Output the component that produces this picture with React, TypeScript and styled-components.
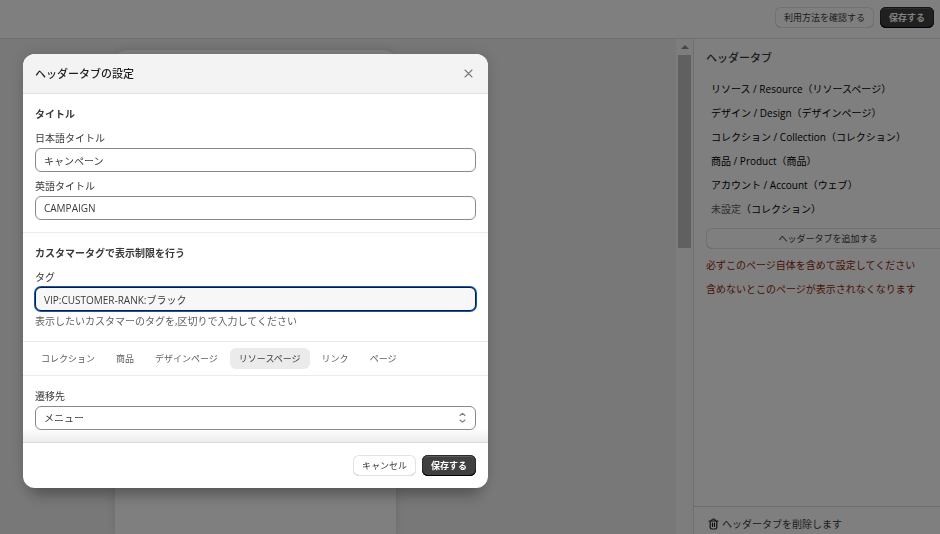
import React, { useState } from "react";
import styled, { createGlobalStyle, css } from "styled-components";

const GlobalStyle = createGlobalStyle`
  *, *::before, *::after { box-sizing: border-box; }
  body {
    margin: 0;
    overflow: hidden;
    background: #f1f1f1;
    color: #3a3a3a;
    font-family: "Open Sans", "Noto Sans CJK JP", sans-serif;
    font-size: 10px;
    line-height: 16px;
  }
  button, input, select { font: inherit; color: inherit; margin: 0; }
  h1, h2, h3, p, ul { margin: 0; padding: 0; }
`;

const Page = styled.div`
  height: 100vh;
  display: flex;
  flex-direction: column;
`;

const TopBar = styled.header`
  display: flex;
  justify-content: flex-end;
  gap: 6px;
  padding: 7px 6px 10px;
  background: #fff;
  border-bottom: 1px solid #dedede;
`;

const Button = styled.button<{ $primary?: boolean; $wide?: boolean }>`
  height: 21px;
  padding: 0 9px;
  border: 0;
  border-radius: 6px;
  font-size: 9px;
  line-height: 21px;
  white-space: nowrap;
  background: #fff;
  box-shadow: inset 0 0 0 1px #e3e3e3, inset 0 -1px 0 #b5b5b5;
  ${(p) => p.$wide && css`width: 100%;`}
  ${(p) =>
    p.$primary &&
    css`
      color: #fff;
      font-weight: 700;
      background: #404040;
      box-shadow: inset 0 -1px 0 #000, inset 0 0 0 1px #2a2a2a, inset 0 2px 0 #5c5c5c;
    `}
`;

const Workspace = styled.div`
  flex: 1;
  min-height: 0;
  display: flex;
`;

const Canvas = styled.main`
  flex: 1;
  min-width: 0;
  padding: 11px 0 0 115px;
  overflow: hidden;
`;

const Sheet = styled.div`
  width: 281px;
  height: 100%;
  border-radius: 12px 12px 0 0;
  background: #fff;
  box-shadow: 0 0 12px rgba(0, 0, 0, 0.1);
`;

const ScrollTrack = styled.div`
  width: 17px;
  padding: 6px 2px 0;
  display: flex;
  flex-direction: column;
  align-items: center;
  gap: 6px;
  background: #fafafa;
`;

const ScrollThumb = styled.div`
  width: 100%;
  height: 193px;
  background: #c1c1c1;
`;

const SidePanel = styled.aside`
  flex: 0 0 247px;
  border-left: 1px solid #dcdcdc;
  background: #fff;
  overflow: hidden;
  display: flex;
  flex-direction: column;
`;

const PanelContent = styled.div`
  flex: 1;
  min-width: 268px;
  padding: 11px 12px;
`;

const PanelTitle = styled.h2`
  font-size: 11px;
  font-weight: 500;
`;

const TabList = styled.ul`
  list-style: none;
  padding: 11px 5px 7px;
  color: #000;
`;

const TabListItem = styled.li<{ $unset?: boolean }>`
  line-height: 24px;
  white-space: nowrap;
  span { color: ${(p) => (p.$unset ? "#616161" : "inherit")}; }
`;

const Warning = styled.p`
  margin-top: 8px;
  color: #8e1f0b;
  white-space: nowrap;
`;

const PanelFooter = styled.footer`
  padding: 9px 12px 2px;
  border-top: 1px solid #dcdcdc;
`;

const DeleteButton = styled.button`
  display: flex;
  align-items: center;
  gap: 3px;
  padding: 0 0 0 2px;
  border: 0;
  background: none;
`;

const Backdrop = styled.div`
  position: fixed;
  inset: 0;
  padding: 54px 23px;
  background: rgba(0, 0, 0, 0.5);
`;

const Dialog = styled.form`
  width: 465px;
  max-width: 100%;
  border-radius: 12px;
  overflow: hidden;
  background: #fff;
  box-shadow: 0 15px 15px -8px rgba(0, 0, 0, 0.28), 0 0 16px rgba(0, 0, 0, 0.14);
`;

const DialogHeader = styled.header`
  display: flex;
  align-items: center;
  justify-content: space-between;
  padding: 12px;
  height: 40px;
  background: #f3f3f3;
  border-bottom: 1px solid #e1e1e1;
`;

const DialogTitle = styled.h1`
  font-size: 11px;
  font-weight: 500;
  color: #1f1f1f;
`;

const IconButton = styled.button`
  display: flex;
  padding: 2px;
  border: 0;
  background: none;
`;

const Section = styled.section<{ $fade?: boolean }>`
  display: flex;
  flex-direction: column;
  gap: 6px;
  padding: 12px;
  border-bottom: 1px solid ${(p) => (p.$fade ? "#dcdcdc" : "#ebebeb")};
  ${(p) => p.$fade && css`background: linear-gradient(to top, #ececec, #fff 14px);`}
`;

const SectionTitle = styled.h2`
  margin-bottom: 2px;
  font-size: 10px;
  font-weight: 700;
`;

const Field = styled.div`
  display: flex;
  flex-direction: column;
  gap: 2px;
`;

const fieldBox = css`
  width: 100%;
  height: 24px;
  padding: 0 8px;
  border: 1px solid #8a8a8a;
  border-radius: 6px;
  background: #fff;
`;

const TextInput = styled.input<{ $focused?: boolean }>`
  ${fieldBox}
  outline: 0;
  ${(p) =>
    p.$focused &&
    css`
      border-color: #1a1a1a;
      background: #f7f7f7;
      box-shadow: 0 0 0 1px #005bd3;
    `}
`;

const Help = styled.p`
  color: #616161;
`;

const SelectWrap = styled.div`
  position: relative;
  svg {
    position: absolute;
    right: 9px;
    top: 6px;
    pointer-events: none;
  }
`;

const Select = styled.select`
  ${fieldBox}
  appearance: none;
`;

const Tabs = styled.div`
  display: flex;
  gap: 3px;
  padding: 6px 9px;
  border-bottom: 1px solid #ebebeb;
`;

const Tab = styled.button<{ $active: boolean }>`
  height: 21px;
  padding: 0 9px;
  border: 0;
  border-radius: 6px;
  font-size: 9px;
  line-height: 21px;
  white-space: nowrap;
  color: ${(p) => (p.$active ? "#404040" : "#616161")};
  background: ${(p) => (p.$active ? "#ebebeb" : "none")};
`;

const DialogFooter = styled.footer`
  display: flex;
  justify-content: flex-end;
  gap: 6px;
  padding: 12px;
`;

const CloseIcon = () => (
  <svg width="11" height="11" viewBox="0 0 11 11" fill="none" stroke="#7a7a7a" strokeWidth="1.1" strokeLinecap="round">
    <path d="M2 2l7 7M9 2l-7 7" />
  </svg>
);

const UpDownIcon = () => (
  <svg width="9" height="12" viewBox="0 0 9 12" fill="none" stroke="#7a7a7a" strokeWidth="1.1" strokeLinecap="round" strokeLinejoin="round">
    <path d="M2 3.500l2.500-2.200L7 3.500M2 8l2.500 2.200L7 8" />
  </svg>
);

const TrashIcon = () => (
  <svg width="11" height="12" viewBox="0 0 11 12" fill="none" stroke="#1f1f1f" strokeWidth="1.2" strokeLinecap="round" strokeLinejoin="round">
    <path d="M1 3h9M3.500 3c0-1.200.8-2 2-2s2 .8 2 2M2.200 3v6.500c0 .9.600 1.500 1.500 1.500h3.600c.9 0 1.500-.6 1.500-1.500V3M4.500 5.200v3.300M6.500 5.200v3.300" />
  </svg>
);

const headerTabs = [
  { name: "リソース / Resource", kind: "リソースページ" },
  { name: "デザイン / Design", kind: "デザインページ" },
  { name: "コレクション / Collection", kind: "コレクション" },
  { name: "商品 / Product", kind: "商品" },
  { name: "アカウント / Account", kind: "ウェブ" },
  { name: "未設定", kind: "コレクション", unset: true },
];

const linkKinds = ["コレクション", "商品", "デザインページ", "リソースページ", "リンク", "ページ"];

export default function App() {
  const [kind, setKind] = useState("リソースページ");

  return (
    <>
      <GlobalStyle />
      <Page lang="ja">
        <TopBar>
          <Button type="button">利用方法を確認する</Button>
          <Button type="button" $primary>保存する</Button>
        </TopBar>
        <Workspace>
          <Canvas>
            <Sheet />
          </Canvas>
          <ScrollTrack>
            <svg width="8" height="4" viewBox="0 0 8 4" fill="#8c8c8c">
              <path d="M4 0l4 4H0z" />
            </svg>
            <ScrollThumb />
          </ScrollTrack>
          <SidePanel>
            <PanelContent>
              <PanelTitle>ヘッダータブ</PanelTitle>
              <TabList>
                {headerTabs.map((t) => (
                  <TabListItem key={t.name} $unset={t.unset}>
                    <span>{t.name}</span>（{t.kind}）
                  </TabListItem>
                ))}
              </TabList>
              <Button type="button" $wide>ヘッダータブを追加する</Button>
              <Warning>必ずこのページ自体を含めて設定してください</Warning>
              <Warning>含めないとこのページが表示されなくなります</Warning>
            </PanelContent>
            <PanelFooter>
              <DeleteButton type="button">
                <TrashIcon />
                ヘッダータブを削除します
              </DeleteButton>
            </PanelFooter>
          </SidePanel>
        </Workspace>
      </Page>

      <Backdrop lang="ja">
        <Dialog role="dialog" aria-modal="true" aria-labelledby="dialog-title" onSubmit={(e) => e.preventDefault()}>
          <DialogHeader>
            <DialogTitle id="dialog-title">ヘッダータブの設定</DialogTitle>
            <IconButton type="button" aria-label="閉じる">
              <CloseIcon />
            </IconButton>
          </DialogHeader>
          <Section>
            <SectionTitle>タイトル</SectionTitle>
            <Field>
              <label htmlFor="title-ja">日本語タイトル</label>
              <TextInput id="title-ja" defaultValue="キャンペーン" />
            </Field>
            <Field>
              <label htmlFor="title-en">英語タイトル</label>
              <TextInput id="title-en" defaultValue="CAMPAIGN" />
            </Field>
          </Section>
          <Section>
            <SectionTitle>カスタマータグで表示制限を行う</SectionTitle>
            <Field>
              <label htmlFor="tags">タグ</label>
              <TextInput id="tags" aria-describedby="tags-help" defaultValue="VIP:CUSTOMER-RANK:ブラック" $focused />
              <Help id="tags-help">表示したいカスタマーのタグを,区切りで入力してください</Help>
            </Field>
          </Section>
          <Tabs role="tablist">
            {linkKinds.map((k) => (
              <Tab key={k} type="button" role="tab" aria-selected={k === kind} $active={k === kind} onClick={() => setKind(k)}>
                {k}
              </Tab>
            ))}
          </Tabs>
          <Section $fade>
            <Field>
              <label htmlFor="destination">遷移先</label>
              <SelectWrap>
                <Select id="destination" defaultValue="メニュー">
                  <option>メニュー</option>
                </Select>
                <UpDownIcon />
              </SelectWrap>
            </Field>
          </Section>
          <DialogFooter>
            <Button type="button">キャンセル</Button>
            <Button type="submit" $primary>保存する</Button>
          </DialogFooter>
        </Dialog>
      </Backdrop>
    </>
  );
}
